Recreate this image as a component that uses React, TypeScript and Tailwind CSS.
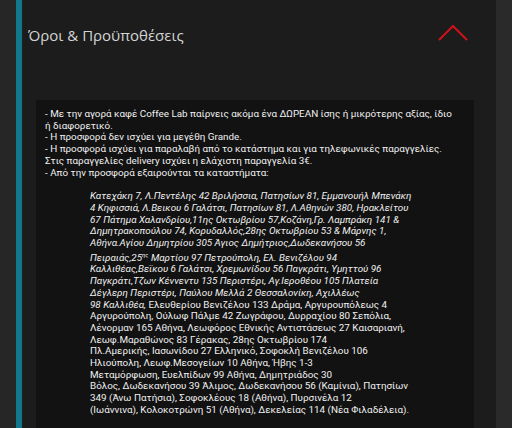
const intro = [
  '- Με την αγορά καφέ Coffee Lab παίρνεις ακόμα ένα ΔΩΡΕΑΝ ίσης ή μικρότερης αξίας, ίδιο',
  'ή διαφορετικό.',
  '- Η προσφορά δεν ισχύει για μεγέθη Grande.',
  '- Η προσφορά ισχύει για παραλαβή από το κατάστημα και για τηλεφωνικές παραγγελίες.',
  'Στις παραγγελίες delivery ισχύει η ελάχιστη παραγγελία 3€.',
  '- Από την προσφορά εξαιρούνται τα καταστήματα:',
];

const italicLines = [
  'Κατεχάκη 7, Λ.Πεντέλης 42 Βριλήσσια, Πατησίων 81, Εμμανουήλ Μπενάκη',
  '4 Κηφισσιά, Λ.Βεικου 6 Γαλάτσι, Πατησίων 81, Λ.Αθηνών 380, Ηρακλείτου',
  '67 Πάτημα Χαλανδρίου,11ης Οκτωβρίου 57,Κοζάνη,Γρ. Λαμπράκη 141 &',
  'Δημητρακοπούλου 74, Κορυδαλλός,28ης Οκτωβρίου 53 & Μάρνης 1,',
  'Αθήνα.Αγίου Δημητρίου 305 Άγιος Δημήτριος,Δωδεκανήσου 56',
];

const italicTail = [
  'Καλλιθέας,Βεϊκου 6 Γαλάτσι, Χρεμωνίδου 56 Παγκράτι, Υμηττού 96',
  'Παγκράτι,Τζων Κέννεντυ 135 Περιστέρι, Αγ.Ιεροθέου 105 Πλατεία',
  'Δέγλερη Περιστέρι, Παύλου Μελλά 2 Θεσσαλονίκη, Αχιλλέως',
];

const regularLines = [
  'Αργυρούπολη, Ούλωφ Πάλμε 42 Ζωγράφου, Δυρραχίου 80 Σεπόλια,',
  'Λένορμαν 165 Αθήνα, Λεωφόρος Εθνικής Αντιστάσεως 27 Καισαριανή,',
  'Λεωφ.Μαραθώνος 83 Γέρακας, 28ης Οκτωβρίου 174',
  'Πλ.Αμερικής, Ιασωνίδου 27 Ελληνικό, Σοφοκλή Βενιζέλου 106',
  'Ηλιούπολη, Λεωφ.Μεσογείων 10 Αθήνα, Ήβης 1-3',
  'Μεταμόρφωση, Ευελπίδων 99 Αθήνα, Δημητριάδος 30',
  'Βόλος, Δωδεκανήσου 39 Άλιμος, Δωδεκανήσου 56 (Καμίνια), Πατησίων',
  '349 (Άνω Πατήσια), Σοφοκλέους 18 (Αθήνα), Πυρσινέλα 12',
  '(Ιωάννινα), Κολοκοτρώνη 51 (Αθήνα), Δεκελείας 114 (Νέα Φιλαδέλεια).',
];

const ChevronUp = () => (
  <svg width="30" height="16" viewBox="0 0 30 16" fill="none">
    <path d="M1 15 L15 1 L29 15" stroke="#d0121b" strokeWidth="2" />
  </svg>
);

export default function App() {
  return (
    <div className="flex h-[428px] w-[512px] overflow-hidden bg-[#262626]">
      <div className="w-4 shrink-0" />
      <div className="w-[6px] shrink-0 bg-[#11788c]" />
      <div className="flex w-[474px] shrink-0 flex-col bg-[#1c1c1c]">
        <div className="flex h-[66px] shrink-0 items-center justify-between pl-[6px] pr-[28px]">
          <h1 className="pt-[4px] text-[15px] text-[#d4d4d4] [font-family:'Open_Sans',sans-serif]">
            Όροι &amp; Προϋποθέσεις
          </h1>
          <div className="mb-[1px]">
            <ChevronUp />
          </div>
        </div>

        <div className="mt-[34px] ml-[14px] mr-[22px] shrink-0 whitespace-nowrap bg-[#121212] px-[9px] pt-[8px] pb-[40px] text-[9.85px] leading-[11.7px] text-[#f0f0f0] [font-family:Roboto,sans-serif]">
          {intro.map((line) => (
            <div key={line}>{line}</div>
          ))}
          <div className="mx-[45px] mt-[12px]">
            {italicLines.map((line) => (
              <div key={line} className="italic">
                {line}
              </div>
            ))}
            <div className="pt-[3px] italic">
              Πειραιάς,25<span className="relative -top-[4px] text-[6px] leading-none">ης</span> Μαρτίου 97
              Πετρούπολη, Ελ. Βενιζέλου 94
            </div>
            {italicTail.map((line) => (
              <div key={line} className="italic">
                {line}
              </div>
            ))}
            <div>
              <span className="italic">98 Καλλιθέα,</span> Ελευθερίου Βενιζέλου 133 Δράμα, Αργυρουπόλεως 4
            </div>
            {regularLines.map((line) => (
              <div key={line}>{line}</div>
            ))}
          </div>
        </div>
      </div>
      <div className="flex-1 bg-[#2a2a2a]" />
    </div>
  );
}
